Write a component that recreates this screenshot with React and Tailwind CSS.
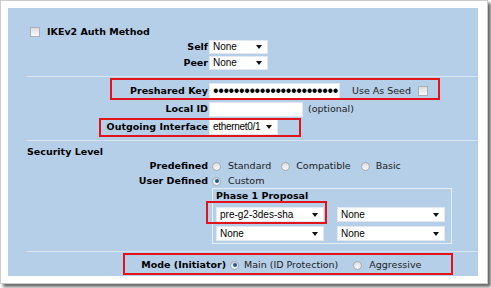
import React from "react";

const Caret = () => (
  <svg width="6" height="4" viewBox="0 0 6 4" className="shrink-0">
    <path d="M0 0h6L3 4z" fill="#111" />
  </svg>
);

const Select = ({ value, className }) => (
  <div
    className={`flex items-center justify-between bg-white border border-[#e2e8ef] pl-[3px] pr-[5px] font-['Liberation_Sans',Arial,sans-serif] text-[10px] text-black ${className}`}
  >
    <span>{value}</span>
    <Caret />
  </div>
);

const Checkbox = () => (
  <span className="block w-[10px] h-[10px] border border-[#a9b0b8] bg-linear-to-b from-[#dcdcdc] to-[#fafafa]" />
);

const Radio = ({ checked }) => (
  <span className="flex items-center justify-center w-[9px] h-[9px] rounded-full border border-[#a3abb3] bg-linear-to-b from-[#dedede] to-[#fbfbfb]">
    {checked && <span className="block w-[4px] h-[4px] rounded-full bg-[#1f5f95]" />}
  </span>
);

const Separator = ({ className }) => (
  <div className={`ml-[19px] h-px bg-[#dbe3ec] ${className}`} />
);

const Label = ({ children, width = "w-[200px]" }) => (
  <div className={`${width} shrink-0 text-right font-bold text-black`}>{children}</div>
);

export default function App() {
  return (
    <div className="relative w-[491px] h-[288px] bg-white overflow-hidden font-['DejaVu_Sans',Verdana,sans-serif] text-[9.5px] text-[#1c1c1c] leading-none">
      <div className="w-[488px] h-[284px] bg-white border border-[#cccccc] pt-[7px] pl-[7px] shadow-[3px_3px_3px_rgba(0,0,0,0.6)]">
        <div className="w-[470px] h-[268px] bg-[#b5cfe9] pt-[17px]">
          <div className="flex items-center h-[14px] pl-[22px]">
            <Checkbox />
            <span className="ml-[7px] font-bold text-black">IKEv2 Auth Method</span>
          </div>

          <div className="flex items-center h-[15px]">
            <Label>Self</Label>
            <Select value="None" className="ml-[1px] w-[59px] h-[14px]" />
          </div>
          <div className="flex items-center h-[15px] mt-[1px]">
            <Label>Peer</Label>
            <Select value="None" className="ml-[1px] w-[59px] h-[14px]" />
          </div>

          <Separator className="mt-[6px]" />

          <div className="flex items-center h-[17px] mt-[5px]">
            <Label>Preshared Key</Label>
            <div className="ml-[1px] w-[131px] h-[16px] bg-white border border-[#e2e8ef] flex items-center pl-[3px] overflow-hidden font-['Liberation_Sans',Arial,sans-serif] text-[16px] text-black tracking-[-0.4px]">
              ••••••••••••••••••••••••
            </div>
            <span className="ml-[12px]">Use As Seed</span>
            <span className="ml-[7px]">
              <Checkbox />
            </span>
          </div>
          <div className="flex items-center h-[16px] mt-[2px]">
            <Label>Local ID</Label>
            <div className="ml-[1px] w-[94px] h-[15px] bg-white border border-[#e2e8ef]" />
            <span className="ml-[5px]">(optional)</span>
          </div>
          <div className="flex items-center h-[17px] mt-[1px]">
            <Label>Outgoing Interface</Label>
            <Select value="ethernet0/1" className="ml-[1px] w-[69px] h-[16px] tracking-[-0.3px]" />
          </div>

          <Separator className="mt-[5px]" />

          <div className="flex items-center h-[12px] mt-[5px] pl-[19px] font-bold text-black">
            Security Level
          </div>
          <div className="flex items-center h-[14px] mt-[1px]">
            <Label>Predefined</Label>
            <span className="ml-[4px]"><Radio /></span>
            <span className="ml-[7px]">Standard</span>
            <span className="ml-[10px]"><Radio /></span>
            <span className="ml-[6px]">Compatible</span>
            <span className="ml-[10px]"><Radio /></span>
            <span className="ml-[6px]">Basic</span>
          </div>
          <div className="flex items-center h-[14px] mt-[1px]">
            <Label>User Defined</Label>
            <span className="ml-[4px]"><Radio checked /></span>
            <span className="ml-[7px]">Custom</span>
          </div>

          <div className="ml-[204px] w-[240px] h-[56px] border border-[#e6edf5] pt-[1px] pl-[3px]">
            <div className="h-[12px] flex items-center font-bold text-black">Phase 1 Proposal</div>
            <div className="flex mt-[5px] gap-[13px]">
              <Select value="pre-g2-3des-sha" className="w-[108px] h-[15px]" />
              <Select value="None" className="w-[108px] h-[15px]" />
            </div>
            <div className="flex mt-[4px] gap-[13px]">
              <Select value="None" className="w-[108px] h-[15px]" />
              <Select value="None" className="w-[108px] h-[15px]" />
            </div>
          </div>

          <Separator className="mt-[7px]" />

          <div className="flex items-center h-[14px] mt-[6px]">
            <Label width="w-[218px]">Mode (Initiator)</Label>
            <span className="ml-[4px]"><Radio checked /></span>
            <span className="ml-[5px]">Main (ID Protection)</span>
            <span className="ml-[15px]"><Radio /></span>
            <span className="ml-[7px]">Aggressive</span>
          </div>
        </div>
      </div>

      <div className="absolute left-[110px] top-[78px] w-[330px] h-[22px] border-2 border-[#e3131b]" />
      <div className="absolute left-[99px] top-[118px] w-[202px] h-[19px] border-2 border-[#e3131b]" />
      <div className="absolute left-[206px] top-[201px] w-[121px] h-[23px] border-2 border-[#e3131b]" />
      <div className="absolute left-[123px] top-[253px] w-[330px] h-[22px] border-2 border-[#e3131b]" />
    </div>
  );
}
